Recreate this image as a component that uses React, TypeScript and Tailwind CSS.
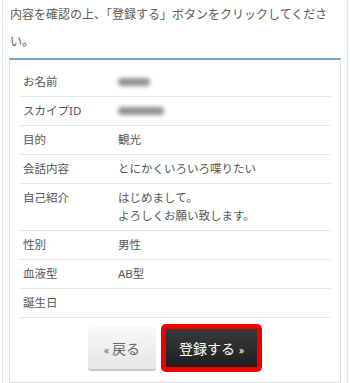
const rows: { label: string; value?: string[]; blur?: number }[] = [
  { label: 'お名前', blur: 32 },
  { label: 'スカイプID', blur: 46 },
  { label: '目的', value: ['観光'] },
  { label: '会話内容', value: ['とにかくいろいろ喋りたい'] },
  { label: '自己紹介', value: ['はじめまして。', 'よろしくお願い致します。'] },
  { label: '性別', value: ['男性'] },
  { label: '血液型', value: ['AB型'] },
  { label: '誕生日' },
];

export default function App() {
  return (
    <div
      className="w-[350px] h-[383px] overflow-hidden bg-white text-[#555]"
      style={{ fontFamily: '"Noto Sans", "Noto Sans CJK JP", sans-serif' }}
    >
      <div className="mx-[2px] h-full border-x border-[#e6e6e6] px-[6px]">
        <p className="pt-[1px] pl-[1px] text-[12px] leading-[27px] text-[#5a5a5a]">
          内容を確認の上、「登録する」ボタンをクリックしてください。
        </p>

        <div className="mt-[3px] border-t-2 border-t-[#6badcf] border-x border-b border-x-[#dcdcdc] border-b-[#dcdcdc] px-[9px] pt-[8px] pb-[10px]">
          {rows.map((row) => (
            <ConfirmRow key={row.label} {...row} />
          ))}

          <div className="flex items-center justify-center gap-[5px] pt-[6px]">
            <button className="w-[68px] h-[42px] rounded-[3px] bg-gradient-to-b from-[#f8f8f8] to-[#e6e6e6] text-[14px] text-[#666] shadow-[0_2px_0_#c8c8c8]">
              <span className="text-[10px] mr-[3px]">«</span>戻る
            </button>
            <div className="rounded-[5px] bg-[#ee0000] p-[5px]">
              <button className="w-[91px] h-[38px] bg-gradient-to-b from-[#3a3a3a] to-[#1f1f1f] text-[14px] text-white">
                登録する<span className="text-[10px] ml-[4px]">»</span>
              </button>
            </div>
          </div>
        </div>
      </div>
    </div>
  );
}

function ConfirmRow({ label, value, blur }: { label: string; value?: string[]; blur?: number }) {
  return (
    <div className="flex border-b border-[#e6e6e6] px-[4px] py-[5px] text-[11.5px] leading-[18px]">
      <div className="w-[95px] shrink-0">{label}</div>
      <div className="flex-1">
        {blur ? (
          <div className="flex h-[18px] items-center">
            <span className="h-[8px] rounded-sm bg-[#909090] blur-[2px]" style={{ width: blur }} />
          </div>
        ) : value ? (
          value.map((line) => <div key={line}>{line}</div>)
        ) : (
          <div className="h-[18px]" />
        )}
      </div>
    </div>
  );
}
